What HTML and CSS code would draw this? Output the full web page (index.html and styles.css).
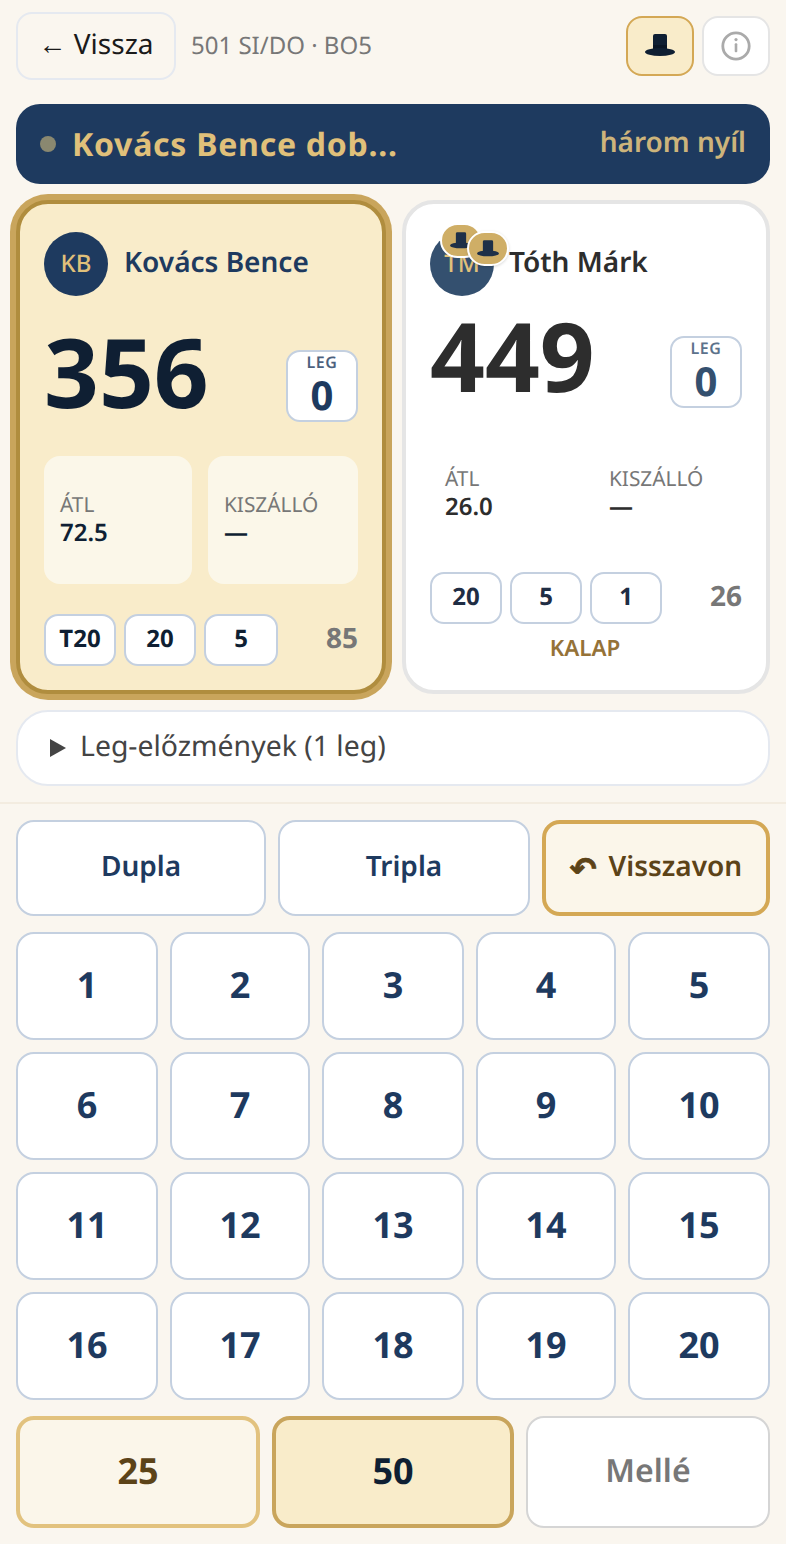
FILE: index.html
```html
<!DOCTYPE html>
<html lang="hu">
<head>
    <meta charset="UTF-8">
    <meta name="viewport" content="width=device-width, initial-scale=1.0">
    <title>501 SI/DO</title>
    <link rel="stylesheet" href="styles.css">
</head>
<body>
    <header class="topBar">
        <button class="backBtn">← Vissza</button>
        <span class="matchInfo">501 SI/DO · BO5</span>
        <div class="topActions">
            <button class="iconBtn hatBtn">
                <svg width="30" height="24" viewBox="0 0 30 24">
                    <path d="M8 2a2 2 0 0 1 2-2h10a2 2 0 0 1 2 2v14H8z" fill="#0f1f33"/>
                    <rect x="8" y="11" width="14" height="5" fill="#0a1626"/>
                    <ellipse cx="15" cy="18" rx="15" ry="4" fill="#0f1f33"/>
                </svg>
            </button>
            <button class="iconBtn infoBtn">
                <svg width="30" height="30" viewBox="0 0 30 30">
                    <circle cx="15" cy="15" r="13.2" fill="none" stroke="#aaa" stroke-width="2.8"/>
                    <circle cx="15" cy="8.6" r="1.6" fill="#aaa"/>
                    <rect x="13.7" y="12.3" width="2.6" height="9" rx="1" fill="#aaa"/>
                </svg>
            </button>
        </div>
    </header>

    <div class="turnBanner">
        <span class="turnDot"></span>
        <span class="turnName">Kovács Bence dob...</span>
        <span class="turnDarts">három nyíl</span>
    </div>

    <section class="players">
        <article class="playerCard activeCard">
            <div class="playerHead">
                <div class="avatar">KB</div>
                <div class="playerName">Kovács Bence</div>
            </div>
            <div class="scoreRow">
                <div class="score">356</div>
                <div class="legBox"><span class="legLabel">LEG</span><span class="legValue">0</span></div>
            </div>
            <div class="stats">
                <div class="statBox"><span class="statLabel">ÁTL</span><span class="statValue">72.5</span></div>
                <div class="statBox"><span class="statLabel">KISZÁLLÓ</span><span class="statValue">—</span></div>
            </div>
            <div class="dartsRow">
                <span class="dart">T20</span>
                <span class="dart">20</span>
                <span class="dart lastDart">5</span>
                <span class="dartSum">85</span>
            </div>
        </article>

        <article class="playerCard otherCard">
            <div class="playerHead">
                <div class="avatarWrap">
                    <div class="avatar">TM</div>
                    <span class="hatBadge firstBadge">
                        <svg width="22" height="18" viewBox="0 0 30 24"><path d="M8 2a2 2 0 0 1 2-2h10a2 2 0 0 1 2 2v14H8z" fill="#1e3048"/><ellipse cx="15" cy="18" rx="15" ry="4" fill="#1e3048"/></svg>
                    </span>
                    <span class="hatBadge secondBadge">
                        <svg width="22" height="18" viewBox="0 0 30 24"><path d="M8 2a2 2 0 0 1 2-2h10a2 2 0 0 1 2 2v14H8z" fill="#1e3048"/><ellipse cx="15" cy="18" rx="15" ry="4" fill="#1e3048"/></svg>
                    </span>
                </div>
                <div class="playerName">Tóth Márk</div>
            </div>
            <div class="scoreRow">
                <div class="score">449</div>
                <div class="legBox"><span class="legLabel">LEG</span><span class="legValue">0</span></div>
            </div>
            <div class="stats">
                <div class="statBox"><span class="statLabel">ÁTL</span><span class="statValue">26.0</span></div>
                <div class="statBox"><span class="statLabel">KISZÁLLÓ</span><span class="statValue">—</span></div>
            </div>
            <div class="dartsRow">
                <span class="dart">20</span>
                <span class="dart">5</span>
                <span class="dart">1</span>
                <span class="dartSum">26</span>
            </div>
            <div class="hatLabel">KALAP</div>
        </article>
    </section>

    <div class="legHistory"><span class="triangle"></span><span class="legHistoryText">Leg-előzmények (1 leg)</span></div>

    <section class="keypad">
        <div class="modifiers">
            <button class="key modKey">Dupla</button>
            <button class="key modKey">Tripla</button>
            <button class="key undoKey"><span class="undoArrow">↶</span><span>Visszavon</span></button>
        </div>
        <div class="numbers" id="numbers"></div>
        <div class="bulls">
            <button class="key bullKey outerBull">25</button>
            <button class="key bullKey innerBull">50</button>
            <button class="key missKey">Mellé</button>
        </div>
    </section>

    <script>
        const numbers = document.getElementById('numbers');
        for (let i = 1; i <= 20; i++) {
            const btn = document.createElement('button');
            btn.className = 'key numKey';
            btn.textContent = i;
            numbers.appendChild(btn);
        }
    </script>
</body>
</html>
```

FILE: styles.css
```css
* {
    box-sizing: border-box;
}

body {
    margin: 0;
    background-color: #faf6ef;
    font-family: "Noto Sans", Arial, sans-serif;
    color: #2d2d2d;
    text-rendering: geometricPrecision;
}

button {
    font-family: inherit;
    text-rendering: inherit;
    cursor: pointer;
}

.topBar {
    display: flex;
    align-items: center;
    height: 92px;
    padding: 12px 16px;
}

.backBtn {
    width: 160px;
    height: 68px;
    border: 2px solid #e5e9f0;
    border-radius: 16px;
    background: transparent;
    font-size: 28px;
    color: #1a1a1a;
    padding: 0 0 4px;
}

.matchInfo {
    margin-left: 15px;
    padding-bottom: 2px;
    font-size: 24px;
    color: #777;
}

.topActions {
    margin-left: auto;
    display: flex;
    gap: 8px;
}

.iconBtn {
    width: 68px;
    height: 60px;
    border-radius: 16px;
    display: flex;
    align-items: center;
    justify-content: center;
    padding: 0;
}

.hatBtn {
    background-color: #f9ecca;
    border: 2px solid #d4a855;
}

.infoBtn {
    background-color: #fff;
    border: 2px solid #e5e5e5;
}

.turnBanner {
    display: flex;
    align-items: center;
    height: 80px;
    margin: 12px 16px 0;
    padding: 0 24px;
    border-radius: 24px;
    background-color: #1e3a5f;
}

.turnDot {
    width: 16px;
    height: 16px;
    border-radius: 50%;
    background-color: #8a8870;
    margin-right: 16px;
}

.turnName {
    font-size: 32px;
    font-weight: 700;
    letter-spacing: 0.75px;
    color: #e0c07a;
}

.turnDarts {
    margin-left: auto;
    padding-bottom: 4px;
    font-size: 28px;
    font-weight: 600;
    color: #cdb47b;
}

.players {
    display: grid;
    grid-template-columns: 370px 368px;
    gap: 16px;
    padding: 16px 16px 0;
}

.playerCard {
    height: 494px;
    padding: 28px 24px;
    border-radius: 32px;
    border: 4px solid #e5e5e5;
    background-color: #fff;
}

.activeCard {
    border-color: #b08d3e;
    background-color: #f9ecca;
    box-shadow: 0 0 0 6px #c9a55c;
    color: #0f1f33;
}

.playerHead {
    display: flex;
    align-items: center;
    gap: 16px;
    height: 64px;
}

.otherCard .playerHead {
    gap: 15px;
}

.avatar {
    width: 64px;
    height: 64px;
    padding-bottom: 2px;
    border-radius: 50%;
    display: flex;
    align-items: center;
    justify-content: center;
    flex-shrink: 0;
    background-color: #1e3a5f;
    color: #e0c07a;
    font-size: 24px;
    font-weight: 500;
}

.otherCard .avatar {
    background-color: #34506f;
}

.avatarWrap {
    position: relative;
    width: 64px;
    height: 64px;
}

.hatBadge {
    position: absolute;
    width: 42px;
    height: 35px;
    border-radius: 18px;
    border: 2px solid #fff;
    background-color: #cfae66;
    display: flex;
    align-items: center;
    justify-content: center;
}

.firstBadge {
    left: 10px;
    top: -9px;
}

.secondBadge {
    left: 37px;
    top: -1px;
    box-shadow: 0 1px 3px rgba(0, 0, 0, 0.15);
}

.playerName {
    padding-bottom: 4px;
    font-size: 28px;
    font-weight: 600;
}

.activeCard .playerName {
    color: #1e3a5f;
}

.scoreRow {
    display: flex;
    align-items: center;
    justify-content: space-between;
    margin-top: 16px;
    height: 120px;
}

.otherCard .scoreRow {
    margin-top: 0;
}

.score {
    font-size: 96px;
    font-weight: 700;
    line-height: 120px;
}

.legBox {
    width: 72px;
    height: 72px;
    margin-top: 28px;
    border-radius: 14px;
    border: 2px solid #c4d0e0;
    background-color: #fff;
    display: flex;
    flex-direction: column;
    align-items: center;
    color: #1e3a5f;
}

.otherCard .legBox {
    margin-top: 32px;
    color: #34506f;
}

.legLabel {
    font-size: 16px;
    font-weight: 600;
    line-height: 20px;
    letter-spacing: 0.5px;
    opacity: 0.8;
}

.legValue {
    font-size: 40px;
    font-weight: 700;
    line-height: 46px;
}

.stats {
    display: grid;
    grid-template-columns: 1fr 1fr;
    gap: 16px;
    margin-top: 24px;
}

.activeCard .stats {
    grid-template-columns: 148px 150px;
}

.statBox {
    height: 128px;
    padding: 0 16px 2px;
    border-radius: 16px;
    display: flex;
    flex-direction: column;
    justify-content: center;
}

.activeCard .statBox {
    background-color: #fbf7e9;
}

.otherCard .stats {
    margin-top: 14px;
}

.otherCard .statBox {
    padding-left: 15px;
}

.statLabel {
    font-size: 20.8px;
    line-height: 28px;
    color: #777;
}

.statValue {
    font-size: 24px;
    font-weight: 600;
    line-height: 28px;
}

.dartsRow {
    display: flex;
    align-items: center;
    gap: 8px;
    margin-top: 30px;
}

.otherCard .dartsRow {
    margin-top: 14px;
    color: #1f2d44;
}

.dart {
    width: 72px;
    height: 52px;
    padding-bottom: 4px;
    border-radius: 14px;
    border: 2px solid #c4d0e0;
    background-color: #fff;
    display: flex;
    align-items: center;
    justify-content: center;
    font-size: 24px;
    font-weight: 700;
}

.lastDart {
    width: 74px;
}

.dartSum {
    margin-left: auto;
    padding-bottom: 4px;
    font-size: 28px;
    font-weight: 700;
    color: #777;
}

.hatLabel {
    margin-top: 8px;
    padding-right: 2px;
    text-align: center;
    font-size: 22.4px;
    font-weight: 600;
    color: #957238;
}

.legHistory {
    display: flex;
    align-items: center;
    height: 76px;
    margin: 16px 16px 0;
    padding: 0 32px;
    border: 2px solid #e5e9f0;
    border-radius: 32px;
    background-color: #fff;
    color: #444;
}

.legHistoryText {
    padding-bottom: 5px;
    font-size: 28.4px;
}

.triangle {
    width: 0;
    height: 0;
    border-left: 16px solid #444;
    border-top: 9px solid transparent;
    border-bottom: 9px solid transparent;
    margin-right: 14px;
}

.keypad {
    margin-top: 16px;
    padding: 16px;
    border-top: 2px solid #f3ece0;
}

.modifiers {
    display: grid;
    grid-template-columns: 250px 252px 228px;
    gap: 12px;
}

.key {
    border-radius: 18px;
    border: 2px solid #c4d0e0;
    background-color: #fff;
    color: #1e3a5f;
    font-weight: 700;
    padding: 0 0 4px;
}

.modKey {
    height: 96px;
    font-size: 28px;
    font-weight: 600;
}

.undoKey {
    height: 96px;
    display: flex;
    align-items: center;
    justify-content: center;
    gap: 12px;
    font-size: 28px;
    font-weight: 600;
    border: 4px solid #d4a855;
    background-color: #fbf6ea;
    color: #5c4318;
}

.undoArrow {
    padding-top: 6px;
    font-family: "DejaVu Sans", sans-serif;
    font-size: 32px;
    font-weight: 700;
    line-height: 1;
    -webkit-text-stroke: 0.8px #5c4318;
}

.numbers {
    display: grid;
    grid-template-columns: 142px 140px 142px 140px 142px;
    gap: 12px;
    margin-top: 16px;
}

.numKey {
    height: 108px;
    font-size: 36px;
}

.bulls {
    display: grid;
    grid-template-columns: 244px 242px 244px;
    gap: 12px;
    margin-top: 16px;
}

.bullKey {
    height: 112px;
    font-size: 36px;
}

.outerBull {
    border: 4px solid #e2c27e;
    background-color: #fbf6ea;
    color: #5c4318;
}

.innerBull {
    border: 4px solid #c9a55c;
    background-color: #f9ecca;
    color: #0f1f33;
}

.missKey {
    height: 112px;
    font-size: 32px;
    font-weight: 600;
    border-color: #d5d5d5;
    color: #777;
}
```
